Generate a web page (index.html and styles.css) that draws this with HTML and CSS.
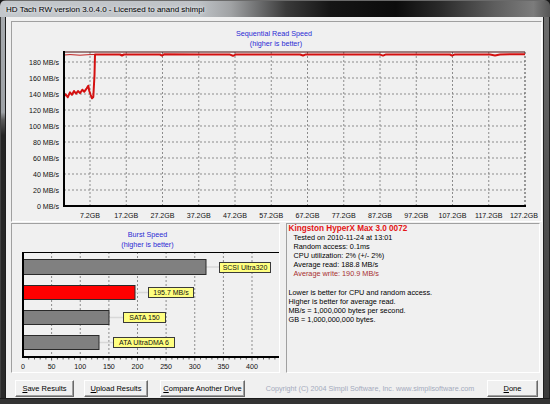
FILE: index.html
```html
<!DOCTYPE html>
<html>
<head>
<meta charset="utf-8">
<link rel="stylesheet" href="styles.css">
</head>
<body>
<div class="window">
  <div class="titlebar"><span class="title-text">HD Tach RW version 3.0.4.0 - Licensed to anand shimpi</span></div>
  <div class="main">
    <div class="frame-l"></div>
    <div class="client">
      <div class="panel chart-panel">
        <svg class="chart" width="529" height="199" viewBox="12 22 529 199">
          <text class="ctitle" x="274" y="36">Sequential Read Speed</text>
          <text class="ctitle" x="276" y="45.5">(higher is better)</text>
          <g class="grid">
            <line x1="64" y1="62" x2="525" y2="62"/>
            <line x1="64" y1="78" x2="525" y2="78"/>
            <line x1="64" y1="94" x2="525" y2="94"/>
            <line x1="64" y1="110" x2="525" y2="110"/>
            <line x1="64" y1="126" x2="525" y2="126"/>
            <line x1="64" y1="142" x2="525" y2="142"/>
            <line x1="64" y1="158" x2="525" y2="158"/>
            <line x1="64" y1="174" x2="525" y2="174"/>
            <line x1="64" y1="190" x2="525" y2="190"/>
            <line x1="90" y1="52" x2="90" y2="206"/>
            <line x1="126.25" y1="52" x2="126.25" y2="206"/>
            <line x1="162.5" y1="52" x2="162.5" y2="206"/>
            <line x1="198.75" y1="52" x2="198.75" y2="206"/>
            <line x1="235" y1="52" x2="235" y2="206"/>
            <line x1="271.25" y1="52" x2="271.25" y2="206"/>
            <line x1="307.5" y1="52" x2="307.5" y2="206"/>
            <line x1="343.75" y1="52" x2="343.75" y2="206"/>
            <line x1="380" y1="52" x2="380" y2="206"/>
            <line x1="416.25" y1="52" x2="416.25" y2="206"/>
            <line x1="452.5" y1="52" x2="452.5" y2="206"/>
            <line x1="488.75" y1="52" x2="488.75" y2="206"/>
            <line class="edge" x1="525" y1="52" x2="525" y2="206"/>
          </g>
          <g class="ylab">
            <text x="59" y="64.6">180 MB/s</text>
            <text x="59" y="80.6">160 MB/s</text>
            <text x="59" y="96.6">140 MB/s</text>
            <text x="59" y="112.6">120 MB/s</text>
            <text x="59" y="128.6">100 MB/s</text>
            <text x="59" y="144.6">80 MB/s</text>
            <text x="59" y="160.6">60 MB/s</text>
            <text x="59" y="176.6">40 MB/s</text>
            <text x="59" y="192.6">20 MB/s</text>
            <text x="59" y="208.6">0 MB/s</text>
          </g>
          <g class="xlab">
            <text x="90" y="217.5">7.2GB</text>
            <text x="126.25" y="217.5">17.2GB</text>
            <text x="162.5" y="217.5">27.2GB</text>
            <text x="198.75" y="217.5">37.2GB</text>
            <text x="235" y="217.5">47.2GB</text>
            <text x="271.25" y="217.5">57.2GB</text>
            <text x="307.5" y="217.5">67.2GB</text>
            <text x="343.75" y="217.5">77.2GB</text>
            <text x="380" y="217.5">87.2GB</text>
            <text x="416.25" y="217.5">97.2GB</text>
            <text x="452.5" y="217.5">107.2GB</text>
            <text x="488.75" y="217.5">117.2GB</text>
            <text x="524" y="217.5">127.2GB</text>
          </g>
          <line class="topline" x1="64" y1="52" x2="525" y2="52"/>
          <polyline class="readline" points="64,96.5 65.7,94.3 67.7,97.3 70,92.3 72,94.8 74,91 76,93.7 78,91 80,93.2 82.3,89.7 84.3,91.7 86.7,88.3 88.3,85.7 89.3,91 90.7,95 92,98.3 93.3,97 94.5,75 95,54.5 120,54.5 122,55.5 124,54.5 160,54.5 162,55.6 164,54.3 200,54.5 230,54.6 233,55.8 236,54.4 270,54.5 300,54.5 303,55.5 306,54.4 350,54.5 380,54.6 383,55.6 386,54.4 420,54.5 450,54.5 452,55.6 455,54.4 490,54.5 495,55.4 500,54.4 525,54.3"/>
          <polyline class="readtop" points="64,55 70,54.6 80,55.2 90,54.6 95,54.5"/>
          <line class="axis" x1="64" y1="51" x2="64" y2="207"/>
          <line class="axis" x1="63" y1="206" x2="526" y2="206"/>
        </svg>
      </div>
      <div class="lower">
        <div class="panel burst-panel">
          <svg class="chart" width="267" height="148" viewBox="12 224 267 148">
            <text class="ctitle" x="147.5" y="237">Burst Speed</text>
            <text class="ctitle" x="147.5" y="246.5">(higher is better)</text>
            <g class="grid">
              <line x1="51.6" y1="252" x2="51.6" y2="357"/>
              <line x1="80.25" y1="252" x2="80.25" y2="357"/>
              <line x1="108.9" y1="252" x2="108.9" y2="357"/>
              <line x1="137.5" y1="252" x2="137.5" y2="357"/>
              <line x1="166.1" y1="252" x2="166.1" y2="357"/>
              <line x1="194.75" y1="252" x2="194.75" y2="357"/>
              <line x1="223.4" y1="252" x2="223.4" y2="357"/>
              <line x1="252" y1="252" x2="252" y2="357"/>
            </g>
            <g class="ticks">
              <line x1="28.7" y1="357" x2="28.7" y2="359.5"/>
              <line x1="34.5" y1="357" x2="34.5" y2="359.5"/>
              <line x1="40.2" y1="357" x2="40.2" y2="359.5"/>
              <line x1="45.9" y1="357" x2="45.9" y2="359.5"/>
              <line x1="51.6" y1="357" x2="51.6" y2="360.5"/>
              <line x1="57.4" y1="357" x2="57.4" y2="359.5"/>
              <line x1="63.1" y1="357" x2="63.1" y2="359.5"/>
              <line x1="68.8" y1="357" x2="68.8" y2="359.5"/>
              <line x1="74.5" y1="357" x2="74.5" y2="359.5"/>
              <line x1="80.25" y1="357" x2="80.25" y2="360.5"/>
              <line x1="86" y1="357" x2="86" y2="359.5"/>
              <line x1="91.7" y1="357" x2="91.7" y2="359.5"/>
              <line x1="97.4" y1="357" x2="97.4" y2="359.5"/>
              <line x1="103.2" y1="357" x2="103.2" y2="359.5"/>
              <line x1="108.9" y1="357" x2="108.9" y2="360.5"/>
              <line x1="114.6" y1="357" x2="114.6" y2="359.5"/>
              <line x1="120.4" y1="357" x2="120.4" y2="359.5"/>
              <line x1="126.1" y1="357" x2="126.1" y2="359.5"/>
              <line x1="131.8" y1="357" x2="131.8" y2="359.5"/>
              <line x1="137.5" y1="357" x2="137.5" y2="360.5"/>
              <line x1="143.2" y1="357" x2="143.2" y2="359.5"/>
              <line x1="149" y1="357" x2="149" y2="359.5"/>
              <line x1="154.7" y1="357" x2="154.7" y2="359.5"/>
              <line x1="160.4" y1="357" x2="160.4" y2="359.5"/>
              <line x1="166.1" y1="357" x2="166.1" y2="360.5"/>
              <line x1="171.9" y1="357" x2="171.9" y2="359.5"/>
              <line x1="177.6" y1="357" x2="177.6" y2="359.5"/>
              <line x1="183.3" y1="357" x2="183.3" y2="359.5"/>
              <line x1="189" y1="357" x2="189" y2="359.5"/>
              <line x1="194.75" y1="357" x2="194.75" y2="360.5"/>
              <line x1="200.5" y1="357" x2="200.5" y2="359.5"/>
              <line x1="206.2" y1="357" x2="206.2" y2="359.5"/>
              <line x1="211.9" y1="357" x2="211.9" y2="359.5"/>
              <line x1="217.7" y1="357" x2="217.7" y2="359.5"/>
              <line x1="223.4" y1="357" x2="223.4" y2="360.5"/>
              <line x1="229.1" y1="357" x2="229.1" y2="359.5"/>
              <line x1="234.8" y1="357" x2="234.8" y2="359.5"/>
              <line x1="240.6" y1="357" x2="240.6" y2="359.5"/>
              <line x1="246.3" y1="357" x2="246.3" y2="359.5"/>
              <line x1="252" y1="357" x2="252" y2="360.5"/>
              <line x1="257.7" y1="357" x2="257.7" y2="359.5"/>
              <line x1="263.5" y1="357" x2="263.5" y2="359.5"/>
              <line x1="269.2" y1="357" x2="269.2" y2="359.5"/>
              <line x1="274.9" y1="357" x2="274.9" y2="359.5"/>
            </g>
            <g class="connect">
              <line x1="206" y1="267" x2="219" y2="267"/>
              <line x1="135" y1="292.5" x2="148" y2="292.5"/>
              <line x1="109" y1="317.5" x2="123" y2="317.5"/>
              <line x1="99" y1="342.5" x2="113" y2="342.5"/>
            </g>
            <rect class="bar" x="23.5" y="259.5" width="182.5" height="15"/>
            <rect class="bar red" x="23.5" y="285.5" width="111.5" height="14"/>
            <rect class="bar" x="23.5" y="310.5" width="85.5" height="14"/>
            <rect class="bar" x="23.5" y="335.5" width="75.5" height="14"/>
            <rect class="tag" x="219.5" y="262.5" width="51" height="10"/>
            <rect class="tag" x="148.5" y="287.5" width="45" height="10"/>
            <rect class="tag" x="123.5" y="312.5" width="42" height="10"/>
            <rect class="tag" x="113.5" y="337.5" width="61" height="10"/>
            <g class="tagtext">
              <text x="245" y="270.2">SCSI Ultra320</text>
              <text x="171" y="295.2">195.7 MB/s</text>
              <text x="144.5" y="320.2">SATA 150</text>
              <text x="144" y="345.2">ATA UltraDMA 6</text>
            </g>
            <line class="axis1" x1="23" y1="252.5" x2="279" y2="252.5"/>
            <line class="axis" x1="23" y1="252" x2="23" y2="358"/>
            <line class="axis" x1="22" y1="357" x2="279" y2="357"/>
            <g class="xlab">
              <text x="23" y="369">0</text>
              <text x="51.6" y="369">50</text>
              <text x="80.25" y="369">100</text>
              <text x="108.9" y="369">150</text>
              <text x="137.5" y="369">200</text>
              <text x="166.1" y="369">250</text>
              <text x="194.75" y="369">300</text>
              <text x="223.4" y="369">350</text>
              <text x="252" y="369">400</text>
            </g>
          </svg>
        </div>
        <div class="panel info-panel">
          <div class="drive">Kingston HyperX Max 3.0 0072</div>
          <div class="ind">Tested on 2010-11-24 at 13:01</div>
          <div class="ind">Random access: 0.1ms</div>
          <div class="ind">CPU utilization: 2% (+/- 2%)</div>
          <div class="ind">Average read: 188.8 MB/s</div>
          <div class="ind write">Average write: 190.9 MB/s</div>
          <div class="notes">
            <div>Lower is better for CPU and random access.</div>
            <div>Higher is better for average read.</div>
            <div>MB/s = 1,000,000 bytes per second.</div>
            <div>GB = 1,000,000,000 bytes.</div>
          </div>
        </div>
      </div>
      <div class="buttons">
        <div class="btn btn-save"><u>S</u>ave Results</div>
        <div class="btn btn-upload"><u>U</u>pload Results</div>
        <div class="btn btn-compare"><u>C</u>ompare Another Drive</div>
        <div class="copyright">Copyright (C) 2004 Simpli Software, Inc. www.simplisoftware.com</div>
        <div class="btn btn-done"><u>D</u>one</div>
      </div>
    </div>
    <div class="frame-r"></div>
  </div>
  <div class="frame-b"></div>
</div>
</body>
</html>
```
FILE: styles.css
```css
* { box-sizing: border-box; margin: 0; padding: 0; }
html, body { width: 550px; height: 404px; overflow: hidden; background: #1a1a1a; }
body { font-family: "Liberation Sans", Arial, sans-serif; }

.window {
  width: 550px; height: 404px;
  display: flex; flex-direction: column;
  background: #2e2e2e;
  border-radius: 6px 6px 0 0;
  overflow: hidden;
}
.titlebar {
  height: 17px; flex: none;
  display: flex; align-items: center;
  padding-left: 6px; padding-top: 1px;
  border-top: 1px solid #6a6a6a;
  background: linear-gradient(90deg, #c3c7cb 0, #bfc3c7 36%, #a0a2a4 42%, #3a3a3a 52%, #151515 60%, #0c0c0c 72%, #2a2a2a 80%, #5e5e5e 90%, #7c7c7c 97%, #555 100%);
}
.title-text {
  font-size: 8px; color: #000;
  text-shadow: 0 0 4px #e8ecef, 0 0 3px #e8ecef;
}
.main { flex: 1; display: flex; }
.frame-l {
  width: 6px; flex: none;
  background: linear-gradient(180deg, #a6aaae 0, #9ea2a6 25%, #5a5a5a 27%, #242424 31%, #2a2a2a 100%);
  border-left: 1px solid #404040;
  border-right: 1px solid #1e1e1e;
}
.frame-r {
  width: 7px; flex: none;
  background: linear-gradient(180deg, #6e6e6e 0, #555 40%, #3a3a3a 100%);
  border-left: 1px solid #1e1e1e;
  border-right: 1px solid #202020;
}
.frame-b {
  height: 6px; flex: none;
  background: #333;
  border-top: 1px solid #1a1a1a;
}
.client {
  flex: 1;
  background: #f0f0f0;
  display: flex; flex-direction: column;
  padding: 4px 1px 0 5px;
}
.panel {
  border: 1px solid;
  border-color: #a0a0a0 #ffffff #ffffff #a0a0a0;
  background: #f0f0f0;
}
.chart-panel { height: 201px; }
.chart { display: block; }
.lower { display: flex; margin-top: 1px; height: 150px; }
.burst-panel { width: 269px; height: 150px; }
.info-panel {
  width: 254px; height: 150px; margin-left: 6px;
  font-size: 7.3px; line-height: 9.1px; color: #000;
  padding-left: 1.5px;
  white-space: nowrap;
}
.drive { font-weight: bold; font-size: 8.2px; color: #e41515; }
.ind { padding-left: 5px; }
.write { color: #a83030; }
.notes { margin-top: 9.5px; }

.ctitle { font-size: 7.2px; fill: #2a2ad4; text-anchor: middle; font-family: "Liberation Sans", Arial, sans-serif; }
.grid line { stroke: #8c8c8c; stroke-width: 1; stroke-dasharray: 2 2; }
.grid .edge { stroke: #404040; }
.ylab text { font-size: 7.1px; fill: #111; text-anchor: end; font-family: "Liberation Sans", Arial, sans-serif; }
.xlab text { font-size: 7.1px; fill: #111; text-anchor: middle; font-family: "Liberation Sans", Arial, sans-serif; }
.axis { stroke: #000; stroke-width: 2; }
.axis1 { stroke: #000; stroke-width: 1; }
.topline { stroke: #4a0c0c; stroke-width: 1.2; }
.readline { fill: none; stroke: #d41010; stroke-width: 2; stroke-linejoin: round; }
.readtop { fill: none; stroke: #c02020; stroke-width: 1; }
.ticks line { stroke: #333; stroke-width: 0.8; }
.connect line { stroke: #d8d8d8; stroke-width: 1.5; }
.bar { fill: #808080; stroke: #2a2a2a; stroke-width: 1; }
.bar.red { fill: #ff0000; }
.tag { fill: #ffff80; stroke: #3a3a3a; stroke-width: 1; }
.tagtext text { font-size: 7px; fill: #111; text-anchor: middle; font-family: "Liberation Sans", Arial, sans-serif; }

.buttons {
  display: flex; align-items: center;
  margin-top: 7px; height: 17px;
}
.btn {
  height: 17px;
  display: flex; align-items: center; justify-content: center;
  font-size: 7.5px; color: #000;
  background: #f0f0f0;
  border: 1px solid;
  border-color: #ffffff #6a6a6a #6a6a6a #ffffff;
  box-shadow: inset -1px -1px 0 #a0a0a0;
  white-space: nowrap;
}
.btn u { text-decoration-thickness: 0.6px; text-underline-offset: 1px; }
.btn-save { width: 59px; margin-left: 4px; }
.btn-upload { width: 64px; margin-left: 10px; }
.btn-compare { width: 85px; margin-left: 12px; }
.copyright {
  flex: 1; text-align: center; padding-left: 8px;
  font-size: 7.2px; color: #a4aabd; white-space: nowrap;
}
.btn-done { width: 51px; margin-right: 4px; }
```
